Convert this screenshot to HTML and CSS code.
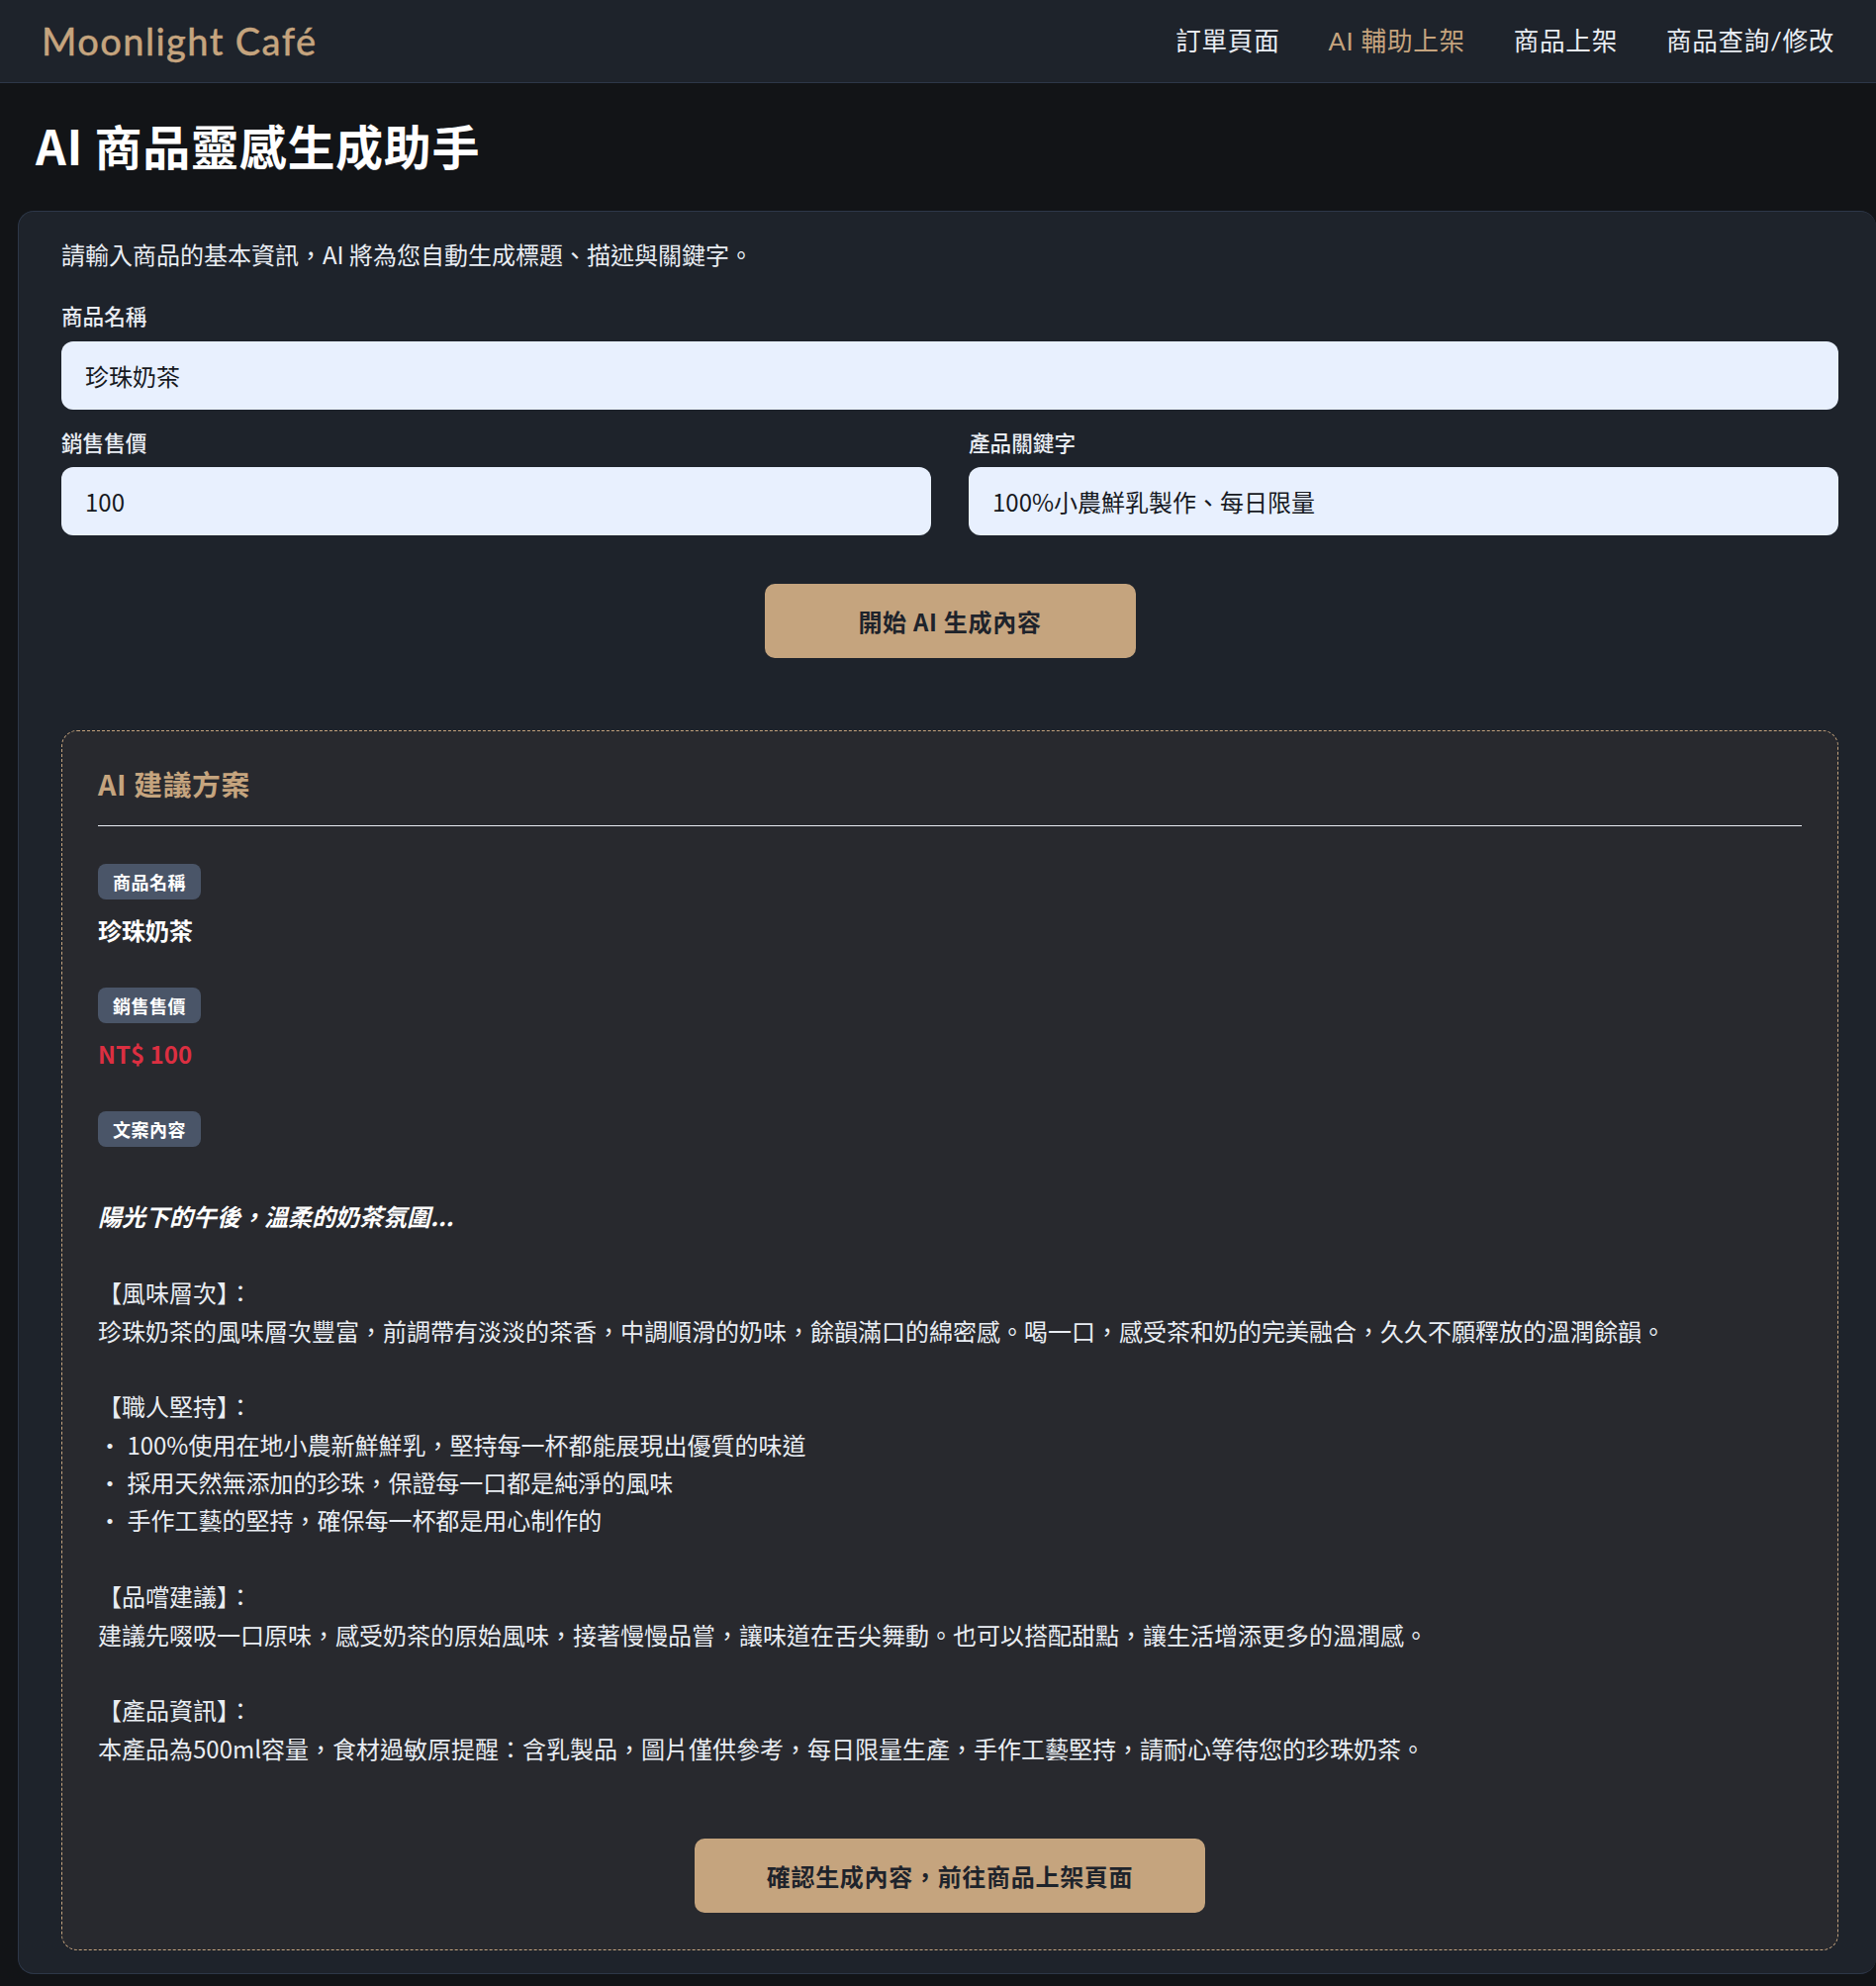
FILE: index.html
```html
<!DOCTYPE html>
<html lang="zh-Hant">
<head>
<meta charset="utf-8">
<title>AI 商品靈感生成助手</title>
<link rel="stylesheet" href="styles.css">
</head>
<body>
<header class="navbar">
  <a class="brand">Moonlight Café</a>
  <nav class="nav-links">
    <a class="nav-link">訂單頁面</a>
    <a class="nav-link active">AI 輔助上架</a>
    <a class="nav-link">商品上架</a>
    <a class="nav-link">商品查詢/修改</a>
  </nav>
</header>
<main class="page">
  <h1 class="page-title">AI 商品靈感生成助手</h1>
  <section class="card">
    <p class="intro">請輸入商品的基本資訊，AI 將為您自動生成標題、描述與關鍵字。</p>
    <div class="field">
      <label class="label">商品名稱</label>
      <input class="input" value="珍珠奶茶">
    </div>
    <div class="field-row">
      <div class="field">
        <label class="label">銷售售價</label>
        <input class="input" value="100">
      </div>
      <div class="field">
        <label class="label">產品關鍵字</label>
        <input class="input" value="100%小農鮮乳製作、每日限量">
      </div>
    </div>
    <div class="actions">
      <button class="btn btn-generate">開始 AI 生成內容</button>
    </div>
    <section class="result">
      <h2 class="result-title">AI 建議方案</h2>
      <div class="block">
        <span class="tag">商品名稱</span>
        <div class="value">珍珠奶茶</div>
      </div>
      <div class="block">
        <span class="tag">銷售售價</span>
        <div class="value price">NT$ 100</div>
      </div>
      <div class="block">
        <span class="tag">文案內容</span>
        <div class="copy">
          <p class="copy-lead">陽光下的午後，溫柔的奶茶氛圍...</p>
          <p>【風味層次】：<br>珍珠奶茶的風味層次豐富，前調帶有淡淡的茶香，中調順滑的奶味，餘韻滿口的綿密感。喝一口，感受茶和奶的完美融合，久久不願釋放的溫潤餘韻。</p>
          <p>【職人堅持】：<br>・ 100%使用在地小農新鮮鮮乳，堅持每一杯都能展現出優質的味道<br>・ 採用天然無添加的珍珠，保證每一口都是純淨的風味<br>・ 手作工藝的堅持，確保每一杯都是用心制作的</p>
          <p>【品嚐建議】：<br>建議先啜吸一口原味，感受奶茶的原始風味，接著慢慢品嘗，讓味道在舌尖舞動。也可以搭配甜點，讓生活增添更多的溫潤感。</p>
          <p>【產品資訊】：<br>本產品為500ml容量，食材過敏原提醒：含乳製品，圖片僅供參考，每日限量生產，手作工藝堅持，請耐心等待您的珍珠奶茶。</p>
        </div>
      </div>
      <div class="actions actions-confirm">
        <button class="btn btn-confirm">確認生成內容，前往商品上架頁面</button>
      </div>
    </section>
  </section>
</main>
</body>
</html>
```
FILE: styles.css
```css
* { box-sizing: border-box; }
html, body { margin: 0; padding: 0; }
body {
  background: #121417;
  color: #e9edf3;
  font-family: "Noto Sans CJK TC", "Noto Sans", sans-serif;
  font-size: 24px;
  line-height: 1.6;
}
.navbar {
  height: 84px;
  background: #1e232b;
  border-bottom: 1px solid #2d3748;
  display: flex;
  align-items: center;
  justify-content: space-between;
  padding: 0 42px;
}
.brand {
  font-family: "Lato", "Noto Sans", sans-serif;
  font-size: 38px;
  font-weight: 500;
  color: #c5a47e;
  letter-spacing: 1.4px;
  -webkit-text-stroke: 0.3px #c5a47e;
}
.nav-links { display: flex; gap: 49px; }
.nav-link {
  font-family: "Lato", "Noto Sans CJK TC", sans-serif;
  font-size: 25.6px;
  font-weight: 400;
  letter-spacing: 0.7px;
  color: #e9edf3;
}
.nav-link.active { color: #c5a47e; }
.page { padding: 0 0 13px 18px; }
.page-title {
  margin: 0;
  padding: 26px 0 31px 18px;
  font-size: 48px;
  font-weight: 700;
  line-height: 1.5;
  letter-spacing: 0.7px;
  color: #fff;
}
.card {
  background: #1e232b;
  border: 1px solid #2d3748;
  border-right: 0;
  border-radius: 16px;
  padding: 24px 38px 23px 43px;
}
.intro { margin: 0 0 26px; }
.field { margin-bottom: 16px; flex: 1; }
.label {
  display: block;
  font-size: 21.6px;
  font-weight: 500;
  margin-bottom: 8px;
}
.input {
  display: block;
  width: 100%;
  height: 69px;
  border: 0;
  border-radius: 12px;
  background: #e8f0fe;
  color: #16191f;
  padding: 0 24px;
  font: inherit;
}
.field-row { display: flex; gap: 38px; }
.actions { display: flex; justify-content: center; padding: 33px 0 0; }
.btn {
  border: 0;
  border-radius: 10px;
  background: #c5a47e;
  color: #1e232b;
  font-family: inherit;
  font-size: 24px;
  font-weight: 700;
  letter-spacing: 0.7px;
  height: 75px;
}
.btn-generate { width: 375px; }
.btn-confirm { width: 516px; }
.result {
  margin-top: 73px;
  background: #28292e;
  border: 1px dashed #c5a47e;
  border-radius: 16px;
  padding: 30px 36px 37px;
}
.result-title {
  margin: 0 0 35px;
  padding-bottom: 18px;
  border-bottom: 1px solid #e9edf3;
  font-size: 28.8px;
  font-weight: 700;
  letter-spacing: 0.6px;
  color: #c5a47e;
}
.block { margin-bottom: 36px; }
.tag {
  display: inline-block;
  background: #4a5568;
  color: #fff;
  border-radius: 8px;
  padding: 0 15px;
  font-size: 18px;
  font-weight: 700;
  height: 36px;
  line-height: 36px;
  letter-spacing: 0.5px;
}
.value {
  margin-top: 12px;
  font-size: 24px;
  font-weight: 700;
  color: #fff;
}
.price { color: #dc2f41; }
.copy { margin-top: 51px; }
.copy p { margin: 0 0 38.4px; }
.copy .copy-lead { font-weight: 700; font-style: italic; color: #fff; }
.actions-confirm { padding: 33px 0 0; }
```
